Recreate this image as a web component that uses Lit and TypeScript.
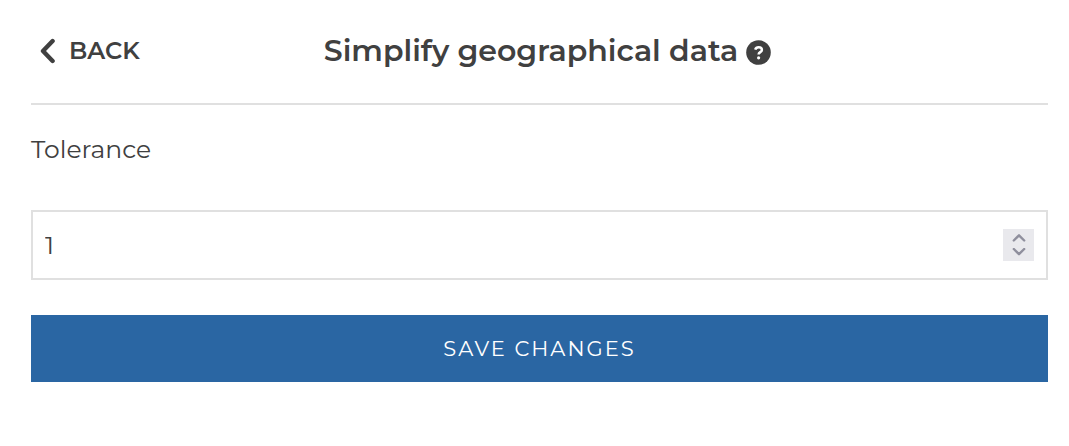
import { LitElement, html, css } from "lit";
import { customElement, state } from "lit/decorators.js";

@customElement("app-root")
export class AppRoot extends LitElement {
  @state() private tolerance = 1;

  static styles = css`
    :host {
      display: block;
      box-sizing: border-box;
      padding: 0 21px 0 31px;
      background: #fff;
      color: #404040;
      font-family: Montserrat, Inter, "Open Sans", sans-serif;
    }
    button {
      font: inherit;
      color: inherit;
      border: 0;
      margin: 0;
      padding: 0;
      background: none;
      cursor: pointer;
    }
    .header {
      display: grid;
      grid-template-columns: 1fr auto 1fr;
      align-items: center;
      height: 103px;
      border-bottom: 2px solid #e0e0e0;
    }
    .back {
      display: flex;
      align-items: center;
      justify-self: start;
      gap: 14px;
      padding: 0 0 2px 8px;
      font-size: 24px;
      line-height: 32px;
      font-weight: 600;
    }
    .title {
      display: flex;
      align-items: center;
      gap: 8px;
      margin: 0;
      padding: 0 0 2px 16px;
      font-size: 30px;
      line-height: 36px;
      font-weight: 600;
    }
    .help {
      display: flex;
      padding-top: 3px;
    }
    svg {
      display: block;
    }
    .label {
      display: block;
      padding: 28px 0 45px;
      font-size: 25px;
      line-height: 32px;
    }
    .field {
      display: flex;
      align-items: center;
      box-sizing: border-box;
      height: 70px;
      padding: 0 12px;
      border: 2px solid #e0e0e0;
    }
    .input {
      flex: 1;
      min-width: 0;
      padding: 0;
      border: 0;
      outline: 0;
      background: none;
      color: inherit;
      font: inherit;
      font-size: 25px;
      line-height: 32px;
      appearance: textfield;
    }
    .input::-webkit-inner-spin-button,
    .input::-webkit-outer-spin-button {
      appearance: none;
      margin: 0;
    }
    .stepper {
      display: flex;
      flex-direction: column;
      width: 31px;
      background: #e9e9ed;
      color: #8f8f9d;
    }
    .step {
      display: flex;
      justify-content: center;
      align-items: center;
      height: 16px;
    }
    .save {
      display: block;
      width: 100%;
      margin-top: 35px;
      padding: 18px 0;
      background: #2a66a3;
      color: #fff;
      font-size: 21px;
      line-height: 31px;
      letter-spacing: 2px;
      text-transform: uppercase;
    }
  `;

  private step(delta: number) {
    this.tolerance += delta;
  }

  render() {
    return html`
      <header class="header">
        <button class="back" type="button">
          <svg width="16" height="26" viewBox="0 0 16 26" fill="none" stroke="currentColor" stroke-width="4.4" stroke-linecap="round" stroke-linejoin="round" aria-hidden="true">
            <path d="M13.6 3 L4 13 L13.6 23" />
          </svg>
          BACK
        </button>
        <h1 class="title">
          Simplify geographical data
          <button class="help" type="button" aria-label="Help">
            <svg width="25" height="25" viewBox="0 0 25 25" aria-hidden="true">
              <circle cx="12.5" cy="12.5" r="12.3" fill="currentColor" />
              <path d="M9.2 9.7 C9.8 7.9 11 7.3 12.6 7.3 C14.6 7.3 15.9 8.4 15.9 10 C15.9 12.1 12.6 12.2 12.6 14.4" fill="none" stroke="#fff" stroke-width="2.5" />
              <circle cx="12.6" cy="17.8" r="1.6" fill="#fff" />
            </svg>
          </button>
        </h1>
      </header>
      <form @submit=${(e: Event) => e.preventDefault()}>
        <label class="label" for="tolerance">Tolerance</label>
        <div class="field">
          <input
            class="input"
            id="tolerance"
            type="number"
            .value=${String(this.tolerance)}
            @input=${(e: Event) => (this.tolerance = Number((e.target as HTMLInputElement).value))}
          />
          <div class="stepper">
            <button class="step" type="button" aria-label="Increase" @click=${() => this.step(1)}>
              <svg width="14" height="10" viewBox="0 0 14 10" fill="none" stroke="currentColor" stroke-width="2.4" stroke-linecap="round" stroke-linejoin="round" aria-hidden="true">
                <path d="M1.8 8.5 L7 3.3 L12.2 8.5" />
              </svg>
            </button>
            <button class="step" type="button" aria-label="Decrease" @click=${() => this.step(-1)}>
              <svg width="14" height="10" viewBox="0 0 14 10" fill="none" stroke="currentColor" stroke-width="2.4" stroke-linecap="round" stroke-linejoin="round" aria-hidden="true">
                <path d="M1.8 1 L7 6.2 L12.2 1" />
              </svg>
            </button>
          </div>
        </div>
        <button class="save" type="submit">Save changes</button>
      </form>
    `;
  }
}
